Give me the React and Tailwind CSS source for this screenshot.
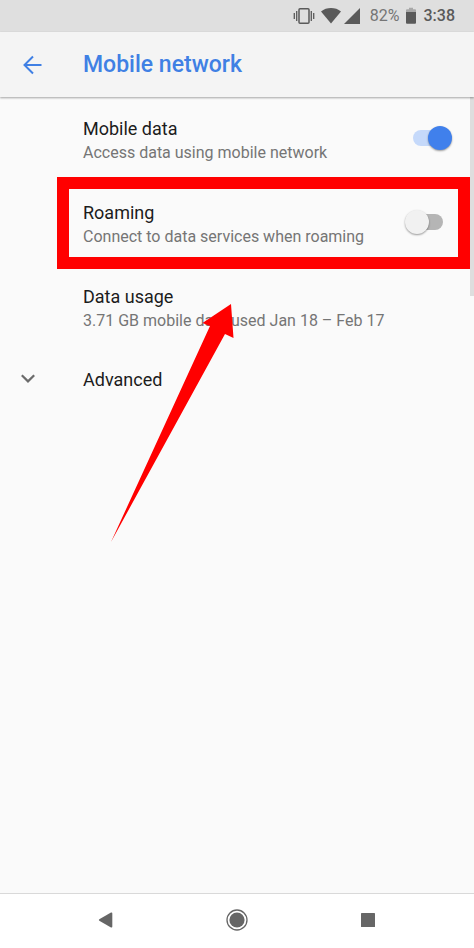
import { useState } from 'react'

function StatusBar() {
  return (
    <div className="flex h-8 shrink-0 items-center justify-end bg-[#dfdfdf] pr-[19px] text-[#5a5a5a]">
      {/* vibrate */}
      <svg width="22" height="18" viewBox="0 0 22 18" fill="none" stroke="currentColor" className="mr-1.5">
        <rect x="6" y="1.7" width="10" height="14.6" rx="1" strokeWidth="1.5" />
        <path d="M3.7 4v10M18.3 4v10" strokeWidth="1.3" />
        <path d="M1.3 6v6M20.7 6v6" strokeWidth="1.3" />
      </svg>
      {/* wifi */}
      <svg width="20" height="18" viewBox="0 0 20 18" fill="currentColor" className="mr-[3px]">
        <path d="M0 4.4C5.6-.2 14.4-.2 20 4.4L10 16.6Z" />
      </svg>
      {/* signal */}
      <svg width="16" height="18" viewBox="0 0 16 18" fill="currentColor" className="mr-2.5">
        <path d="M16 1v16H0Z" />
      </svg>
      <span className="mr-1.5 text-base font-normal text-[#757575]">82%</span>
      {/* battery */}
      <svg width="10" height="18" viewBox="0 0 10 18" className="mr-2">
        <path d="M3 .8h4v1.5h2q1 0 1 1V6H0V3.3q0-1 1-1h2Z" fill="#a8a8a8" />
        <path d="M0 5h10v10.8q0 1-1 1H1q-1 0-1-1Z" fill="currentColor" />
      </svg>
      <span className="text-base font-medium">3:38</span>
    </div>
  )
}

function Switch({ id, checked, onChange }) {
  return (
    <input
      id={id}
      type="checkbox"
      role="switch"
      checked={checked}
      onChange={e => onChange(e.target.checked)}
      className="relative mb-0.5 h-6 w-12 shrink-0 cursor-pointer appearance-none before:absolute before:top-1 before:left-[9px] before:h-4 before:w-[30px] before:rounded-full before:bg-[#b5b5b5] after:absolute after:top-0 after:left-px after:size-6 after:rounded-full after:bg-[#f1f1f1] after:shadow-[0_1px_2px_rgba(0,0,0,0.4)] after:transition-all checked:before:bg-[#c5d9fa] checked:after:left-6 checked:after:bg-[#4080ec]"
    />
  )
}

function RowText({ title, summary }) {
  return (
    <span className="flex flex-1 flex-col pt-1">
      <span className="text-lg leading-6 text-[#1c1c1c]">{title}</span>
      {summary && <span className="text-base leading-6 text-[#757575]">{summary}</span>}
    </span>
  )
}

export default function App() {
  const [mobileData, setMobileData] = useState(true)
  const [roaming, setRoaming] = useState(false)

  return (
    <div className="flex min-h-screen flex-col bg-[#fafafa] font-['Roboto',sans-serif]">
      <StatusBar />

      <header className="relative z-10 flex h-[65px] shrink-0 items-center bg-[#f4f4f4] pl-[22px] text-[#4080e4] shadow-[0_1px_2px_rgba(0,0,0,0.35)]">
        <button aria-label="Back" className="mr-10">
          <svg width="21" height="20" viewBox="0 0 21 20" fill="none" stroke="currentColor" strokeWidth="2">
            <path d="M19.5 10H3M11 1.5L2.5 10L11 18.5" />
          </svg>
        </button>
        <h1 className="text-[23px] leading-8 font-medium">Mobile network</h1>
      </header>

      <main className="relative flex-1">
        <label htmlFor="mobile-data" className="flex h-[84px] items-center pr-[22px] pl-[83px]">
          <RowText title="Mobile data" summary="Access data using mobile network" />
          <Switch id="mobile-data" checked={mobileData} onChange={setMobileData} />
        </label>

        <div className="relative">
          <label htmlFor="roaming" className="flex h-[84px] items-center pr-[22px] pl-[83px]">
            <RowText title="Roaming" summary="Connect to data services when roaming" />
            <Switch id="roaming" checked={roaming} onChange={setRoaming} />
          </label>
          {/* highlight frame */}
          <div className="pointer-events-none absolute -top-1 right-1 -bottom-1 left-[57px] border-12 border-[#ff0000]" />
        </div>

        <button className="flex h-[84px] w-full items-center pl-[83px] text-left">
          <RowText title="Data usage" summary="3.71 GB mobile data used Jan 18 – Feb 17" />
        </button>

        <button className="flex h-[58px] w-full items-center pl-5 text-left">
          <svg width="16" height="16" viewBox="0 0 16 16" fill="none" stroke="#6b6b6b" strokeWidth="2.2" className="mr-[47px]">
            <path d="M1.8 5.2L8 11.4L14.2 5.2" />
          </svg>
          <RowText title="Advanced" />
        </button>

        {/* pointer arrow */}
        <svg width="124" height="240" viewBox="0 0 124 240" className="pointer-events-none absolute top-[206px] left-[111px]">
          <path d="M120 1L122.5 35L114 31L0 239L99 23L91.500 20Z" fill="#ff0000" />
        </svg>

        {/* scrollbar */}
        <div className="absolute top-0 right-0 h-[199px] w-1 bg-[#dedede]" />
      </main>

      <nav className="flex h-[55px] shrink-0 items-center justify-around border-t border-[#d9d9d9] bg-white px-10 pb-0.5 text-[#666]">
        <button aria-label="Back">
          <svg width="22" height="22" viewBox="0 0 22 22" fill="currentColor">
            <path d="M4.3 10.3L16 3.6q1.3-.5 1.3.8v13.2q0 1.3-1.3.8L4.3 11.7q-1-.7 0-1.4Z" />
          </svg>
        </button>
        <button aria-label="Home">
          <svg width="22" height="22" viewBox="0 0 22 22">
            <circle cx="11" cy="11" r="10" fill="none" stroke="currentColor" strokeWidth="1.3" />
            <circle cx="11" cy="11" r="7.6" fill="currentColor" />
          </svg>
        </button>
        <button aria-label="Recent apps">
          <svg width="22" height="22" viewBox="0 0 22 22" fill="currentColor">
            <rect x="4" y="4" width="14" height="14" rx="0.6" />
          </svg>
        </button>
      </nav>
    </div>
  )
}
